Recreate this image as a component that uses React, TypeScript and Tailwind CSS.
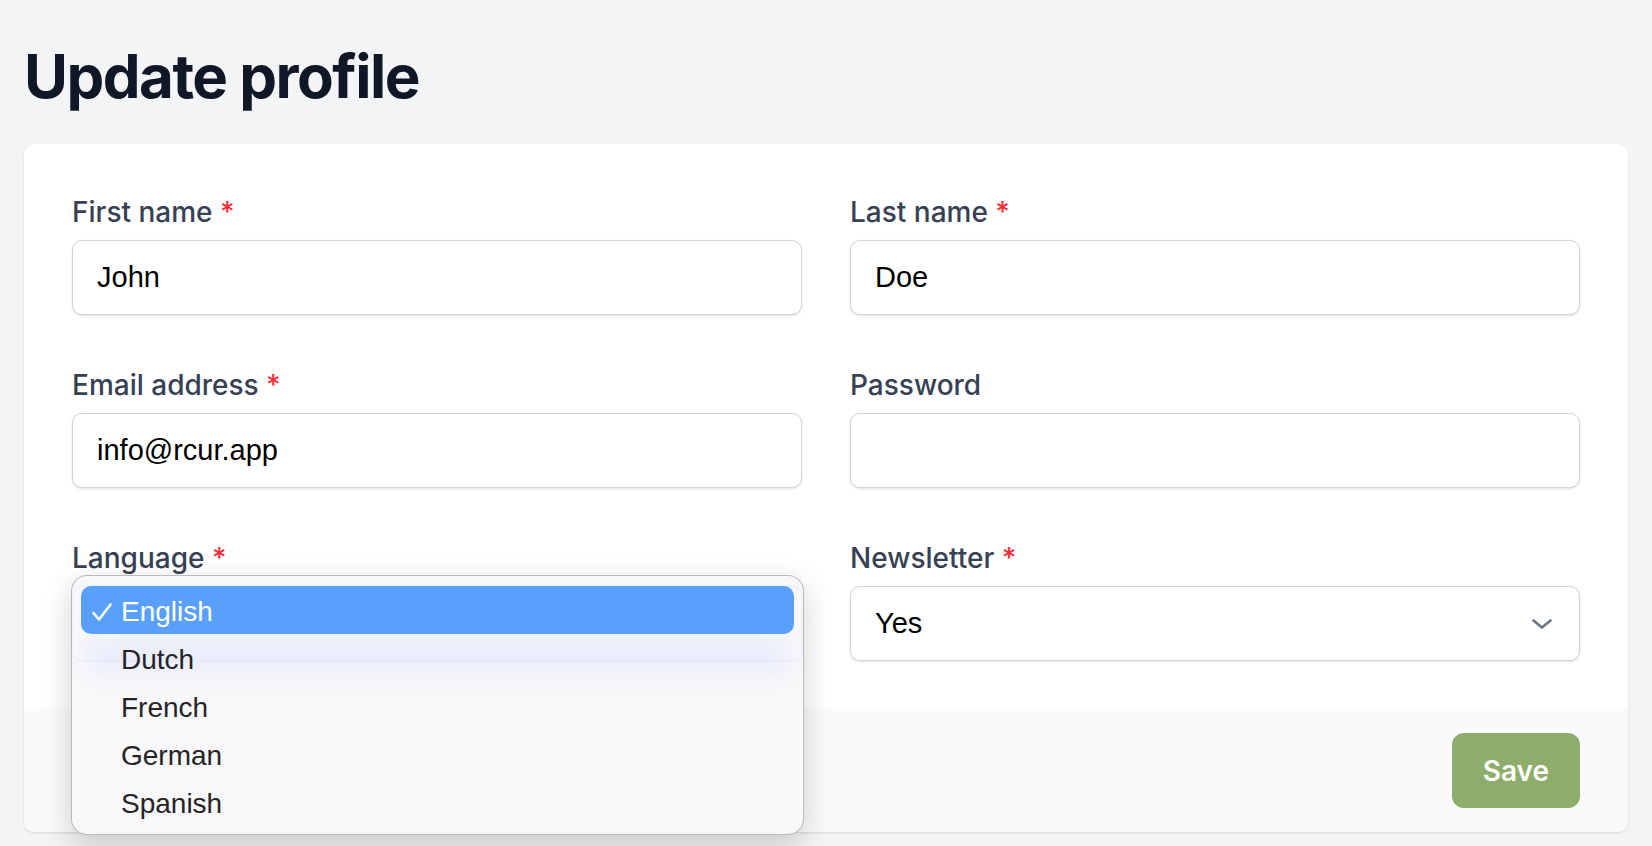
import { useState } from "react";

const languages = ["English", "Dutch", "French", "German", "Spanish"];

function Label({ text, required }: { text: string; required?: boolean }) {
  return (
    <label className="block text-[28px] leading-10 font-medium text-gray-700">
      {text}
      {required && <span className="text-red-500"> *</span>}
    </label>
  );
}

function Chevron() {
  return (
    <svg width="20" height="10" viewBox="0 0 20 10" fill="none" className="shrink-0">
      <polyline
        points="1.5,1.5 10,8.5 18.5,1.5"
        stroke="#6b7280"
        strokeWidth="2.6"
        strokeLinecap="round"
        strokeLinejoin="round"
      />
    </svg>
  );
}

function Check() {
  return (
    <svg width="20" height="18" viewBox="0 0 20 18" fill="none">
      <polyline
        points="1.5,10 7,16.5 18.5,1.5"
        stroke="#ffffff"
        strokeWidth="2.6"
        strokeLinecap="round"
        strokeLinejoin="round"
      />
    </svg>
  );
}

const controlClass =
  "h-[75px] w-full rounded-[10px] border border-gray-300 bg-white px-6 font-['Liberation_Sans',Arial,sans-serif] text-[29px] text-black shadow-sm outline-none";

export default function App() {
  const [firstName, setFirstName] = useState("John");
  const [lastName, setLastName] = useState("Doe");
  const [email, setEmail] = useState("info@rcur.app");
  const [password, setPassword] = useState("");
  const [language] = useState("English");

  return (
    <div className="min-h-screen bg-gray-100 px-6 pt-10 font-['Inter',sans-serif]">
      <h1 className="text-[60px] leading-[72px] font-bold tracking-tight text-gray-900">
        Update profile
      </h1>

      <form className="mt-8 rounded-[10px] bg-white shadow-sm" onSubmit={(e) => e.preventDefault()}>
        <div className="grid grid-cols-2 gap-x-12 gap-y-[50px] p-12">
          <div className="flex flex-col gap-2">
            <Label text="First name" required />
            <input className={controlClass} value={firstName} onChange={(e) => setFirstName(e.target.value)} />
          </div>
          <div className="flex flex-col gap-2">
            <Label text="Last name" required />
            <input className={controlClass} value={lastName} onChange={(e) => setLastName(e.target.value)} />
          </div>
          <div className="flex flex-col gap-2">
            <Label text="Email address" required />
            <input className={controlClass} value={email} onChange={(e) => setEmail(e.target.value)} />
          </div>
          <div className="flex flex-col gap-2">
            <Label text="Password" />
            <input
              className={controlClass}
              type="password"
              value={password}
              onChange={(e) => setPassword(e.target.value)}
            />
          </div>

          <div className="flex flex-col gap-2">
            <Label text="Language" required />
            <div className="relative">
              {/* focused select, hidden under its option list */}
              <div
                className={`${controlClass} flex items-center justify-end border-indigo-600 pr-[27px] ring-1 ring-indigo-600`}
              >
                <Chevron />
              </div>

              <div className="absolute top-[-11px] -right-[2px] -left-px z-10 overflow-hidden rounded-[16px] border border-black/25 bg-[#f8f8fa]/[0.97] pt-[10px] pb-[8px] px-[9px] shadow-[0_10px_30px_rgba(0,0,0,0.18)] font-['Liberation_Sans',Arial,sans-serif] text-[28px]">
                {/* soft tint of the focus ring behind the menu */}
                <div className="absolute top-[64px] right-[14px] left-[14px] h-[30px] rounded-full bg-indigo-300/20 blur-[12px]" />
                {languages.map((item) => {
                  const active = item === language;
                  return (
                    <div
                      key={item}
                      className={`relative flex h-12 items-center rounded-[10px] pt-1 ${
                        active ? "bg-[#58a0fc] text-white" : "text-[#242424]"
                      }`}
                    >
                      <span className="flex w-10 shrink-0 pl-[11px]">{active && <Check />}</span>
                      <span>{item}</span>
                    </div>
                  );
                })}
              </div>
            </div>
          </div>

          <div className="flex flex-col gap-2">
            <Label text="Newsletter" required />
            <div className={`${controlClass} flex items-center justify-between pr-[27px]`}>
              <span>Yes</span>
              <Chevron />
            </div>
          </div>
        </div>

        <div className="flex justify-end rounded-b-[10px] bg-gray-50 px-12 py-6">
          <button
            type="submit"
            className="h-[75px] rounded-[12px] bg-[#8fad6a] px-[31px] text-[28px] font-semibold text-white"
          >
            Save
          </button>
        </div>
      </form>
    </div>
  );
}
